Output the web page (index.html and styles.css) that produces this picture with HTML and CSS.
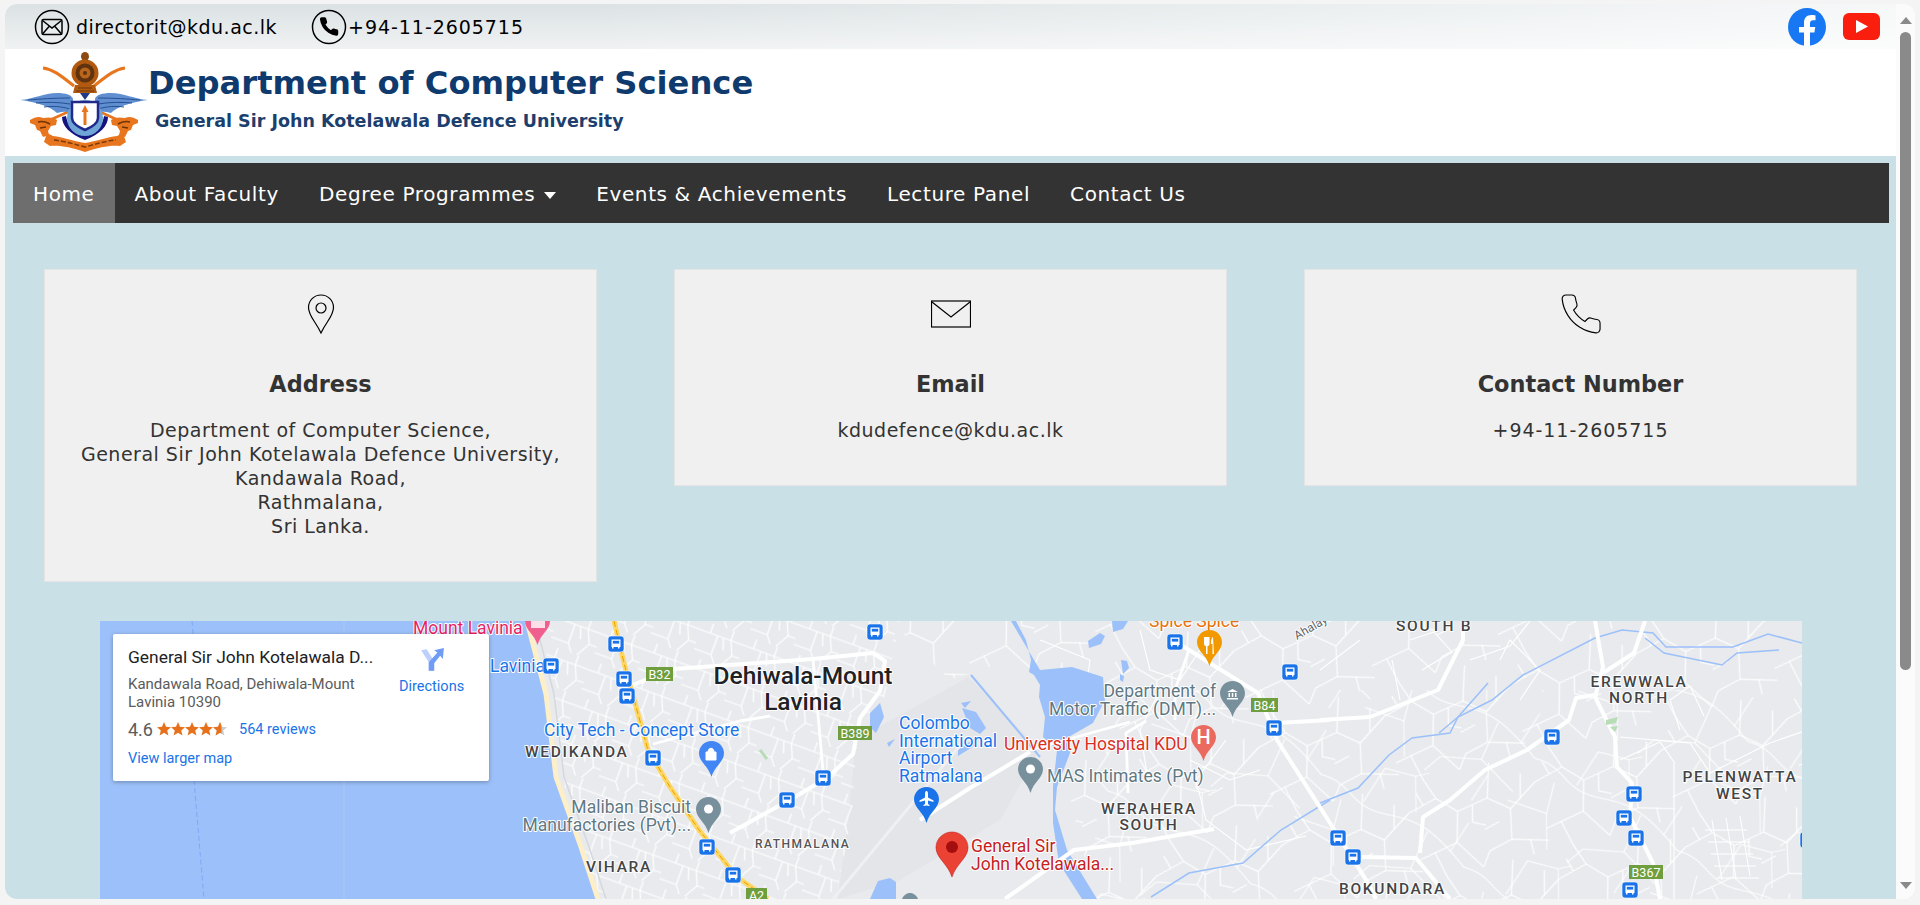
FILE: index.html
```html
<!DOCTYPE html>
<html lang="en">
  <head>
    <meta charset="UTF-8" />
    <title>Department of Computer Science</title>
    <link rel="stylesheet" href="styles.css">
  </head>
  <body>
    <div class="window">
      <div class="page">
        <div class="topbar">
          <div class="topbar_contact">
            <svg class="round_icon" viewBox="0 0 36 36"><circle cx="18" cy="18" r="16.500"/><rect x="8" y="10.500" width="20" height="15" rx="1.500"/><path d="M8.500 11.500 18 19l9.500-7.500M8.500 25l7-8M27.500 25l-7-8"/></svg>
            <span>directorit@kdu.ac.lk</span>
          </div>
          <div class="topbar_contact topbar_phone">
            <svg class="round_icon" viewBox="0 0 36 36"><circle cx="18" cy="18" r="16.500"/><g transform="translate(7 6.500) scale(.92)"><path class="solid" d="M22 16.920v3a2 2 0 0 1-2.180 2 19.790 19.790 0 0 1-8.630-3.070 19.500 19.500 0 0 1-6-6 19.790 19.790 0 0 1-3.070-8.670A2 2 0 0 1 4.110 2h3a2 2 0 0 1 2 1.720 12.840 12.840 0 0 0 .7 2.810 2 2 0 0 1-.45 2.110L8.090 9.910a16 16 0 0 0 6 6l1.270-1.270a2 2 0 0 1 2.110-.45 12.840 12.840 0 0 0 2.810.7A2 2 0 0 1 22 16.920z"/></g></svg>
            <span class="digits">+94-11-2605715</span>
          </div>
          <div class="topbar_social">
            <svg class="fb_icon" viewBox="0 0 38 38"><circle cx="19" cy="19" r="19" fill="#1877f2"/><path fill="#fff" d="M16 38V24.500h-5V19h5v-4.200c0-5 3-7.700 7.500-7.700 2.200 0 4 .4 4 .4v4.800h-2.300c-2.400 0-3.200 1.500-3.200 3V19h5.300l-.9 5.500H22V38z"/></svg>
            <svg class="yt_icon" viewBox="0 0 37 27"><rect width="37" height="27" rx="6" fill="#fa1e0f"/><path fill="#fff" d="M13 7l12 6.500L13 20z"/></svg>
          </div>
        </div>

        <div class="brand">
          <svg class="crest" viewBox="0 0 131 100">
            <!-- swords -->
            <path d="M23 16c9 1 16 6 31 18" stroke="#e8761e" stroke-width="3" fill="none"/>
            <path d="M105 16c-9 1-16 6-31 18" stroke="#e8761e" stroke-width="3" fill="none"/>
            <path d="M30 68l20-9M98 68 78 59" stroke="#e8761e" stroke-width="2.500"/>
            <!-- wheel -->
            <ellipse cx="65" cy="4.500" rx="4" ry="4.500" fill="#8a4a12"/>
            <circle cx="65" cy="21" r="13.500" fill="#b0590f"/>
            <circle cx="65" cy="21" r="9.500" fill="#5f3210"/>
            <circle cx="65" cy="21" r="5.500" fill="#b9651b"/>
            <circle cx="65" cy="21" r="2" fill="#5f3210"/>
            <path d="M55 33h20l2 8H53z" fill="#b0590f"/>
            <path d="M58 36h14M56 39h18" stroke="#6f3a10" stroke-width="1"/>
            <path d="M60 41h10l-5 7z" fill="#1f3a8a"/>
            <!-- wings -->
            <path d="M0 48c14-1 24-7 37-7 9 0 15 2 16 6l-1 14c-4-2-10-1-15 0-4-4-14-10-37-13z" fill="#5f8fd0"/>
            <path d="M128 48c-14-1-24-7-37-7-9 0-15 2-16 6l1 14c4-2 10-1 15 0 4-4 14-10 37-13z" fill="#5f8fd0"/>
            <path d="M8 48c12-1 26-2 42-2M16 51c10-1 22-1 34 1M24 55c8-1 16-1 26 2M120 48c-12-1-26-2-42-2M112 51c-10-1-22-1-34 1M104 55c-8-1-16-1-26 2" stroke="#274f92" stroke-width="1" fill="none"/>
            <!-- anchor -->
            <path d="M42 65l4-1c1 7 5 13 12 16h14c7-3 11-9 12-16l4 1c0 9-8 17-23 23C50 82 42 74 42 65z" fill="#14147f"/>
            <circle cx="65" cy="66" r="18" fill="#6fa5d6"/>
            <path d="M52 50h26v16c0 5-6 9-13 12-7-3-13-7-13-12z" fill="#fff" stroke="#1f2a8a" stroke-width="2.500"/>
            <path d="M65 53l3.500 7h-2v13h-3V60h-2z" fill="#e8761e"/>
            <!-- lions -->
            <path d="M10 68c5-3 9-4 13-2 5-1 10-1 14 2l-1 5-5 1-3 5 1 4-6 2-3-6-3-1-2-5-5-2z" fill="#e8761e"/>
            <path d="M18 70c4-1 8 0 12 2M20 76l6-1" stroke="#6f3406" stroke-width="1.500" fill="none"/>
            <path d="M118 68c-5-3-9-4-13-2-5-1-10-1-14 2l1 5 5 1 3 5-1 4 6 2 3-6 3-1 2-5 5-2z" fill="#e8761e"/>
            <path d="M110 70c-4-1-8 0-12 2M108 76l-6-1" stroke="#6f3406" stroke-width="1.500" fill="none"/>
            <!-- ribbon -->
            <path d="M27 81l6 3c10 1 20 5 32 7 12-2 22-6 32-7l6-3 3 9-6 4c-10-1-20 1-35 6-15-5-25-7-35-6l-6-4z" fill="#e8761e"/>
            <path d="M34 88c10 1 20 4 31 7 11-3 21-6 31-7" stroke="#7a3a0a" stroke-width="1.500" fill="none" stroke-dasharray="5 2"/>
          </svg>
          <div class="brand_text">
            <div class="brand_title">Department of Computer Science</div>
            <div class="brand_sub">General Sir John Kotelawala Defence University</div>
          </div>
        </div>

        <div class="main">
          <ul class="nav">
            <li class="nav_item nav_active">Home</li>
            <li class="nav_item">About Faculty</li>
            <li class="nav_item">Degree Programmes <span class="caret"></span></li>
            <li class="nav_item">Events &amp; Achievements</li>
            <li class="nav_item">Lecture Panel</li>
            <li class="nav_item">Contact Us</li>
          </ul>

          <div class="cards">
            <div class="card card_tall">
              <svg class="card_icon" viewBox="0 0 28 40"><path d="M14 1C7 1 1.500 6.500 1.500 13.500 1.500 22 9 28 14 39c5-11 12.500-17 12.500-25.500C26.500 6.500 21 1 14 1z"/><circle cx="14" cy="14" r="5"/></svg>
              <h3>Address</h3>
              <p>Department of Computer Science,<br>General Sir John Kotelawala Defence University,<br>Kandawala Road,<br>Rathmalana,<br>Sri Lanka.</p>
            </div>
            <div class="card">
              <svg class="card_icon" viewBox="0 0 40 40"><rect x="0.500" y="7" width="39" height="26"/><path d="M1 8l19 15L39 8"/></svg>
              <h3>Email</h3>
              <p>kdudefence@kdu.ac.lk</p>
            </div>
            <div class="card">
              <svg class="card_icon" viewBox="1.500 1.500 21 21"><path class="thin" d="M22 16.920v3a2 2 0 0 1-2.180 2 19.790 19.790 0 0 1-8.630-3.070 19.500 19.500 0 0 1-6-6 19.790 19.790 0 0 1-3.070-8.670A2 2 0 0 1 4.110 2h3a2 2 0 0 1 2 1.720 12.840 12.840 0 0 0 .7 2.810 2 2 0 0 1-.45 2.110L8.090 9.910a16 16 0 0 0 6 6l1.270-1.270a2 2 0 0 1 2.110-.45 12.840 12.840 0 0 0 2.810.7A2 2 0 0 1 22 16.920z"/></svg>
              <h3>Contact Number</h3>
              <p class="digits">+94-11-2605715</p>
            </div>
          </div>

          <div class="map">
            <svg class="map_canvas" viewBox="100 621 1702 278">
              <defs>
                <g id="bus">
                  <rect x="-8" y="-8" width="16" height="16" rx="3" fill="#1a73e8" stroke="#fff" stroke-width=".6"/>
                  <path d="M-4.500-4.500h9v7.500h-1v1.500h-1.500V3h-4.500v1.500h-1.500V3h-.5z" fill="#fff"/>
                  <rect x="-3.200" y="-3.200" width="6.400" height="2.800" fill="#1a73e8"/>
                </g>
                <path id="pin" d="M12.500 0C5.600 0 0 5.500 0 12.300 0 21 9.500 25 12.500 36 15.500 25 25 21 25 12.300 25 5.500 19.400 0 12.500 0z"/>
                <pattern id="blocks" width="46" height="38" patternUnits="userSpaceOnUse" patternTransform="rotate(20)">
                  <path d="M0 10H46M0 30H18L24 38M18 30V10M32 0V10M32 10L38 24H46M38 24L30 38M10 0V10M24 10L28 22" stroke="#fff" stroke-width="1.200" fill="none"/>
                </pattern>
                <pattern id="sparse_a" width="130" height="100" patternUnits="userSpaceOnUse" patternTransform="rotate(-14)">
                  <path d="M0 30L30 22 48 40 80 34 100 50 130 30M30 22L22 0M48 40L40 70 60 100M80 34L90 0M100 50L94 80 130 90M0 78L40 70M94 80L70 86 60 100M112 42 118 18M16 26 12 12M64 37 60 54 72 60M86 60 70 64M22 100 16 74M112 84V100" stroke="#fff" stroke-width="1.100" fill="none"/>
                </pattern>
                <pattern id="sparse_b" width="170" height="130" patternUnits="userSpaceOnUse" patternTransform="rotate(33)">
                  <path d="M0 60C30 50 40 70 70 60S110 40 170 60M50 60V20L80 10 90 0M80 10 100 40M120 50 126 90 170 100M126 90 90 110 84 130M0 110 40 100 60 130M40 100 30 70M140 100V130M150 55 150 20" stroke="#fff" stroke-width="1" fill="none"/>
                </pattern>
              </defs>

              <rect x="100" y="621" width="1702" height="278" fill="#e8eaed"/>
              <path d="M856 740 968 677l72 73-40 70-100 60-62 19 10-80z" fill="#e3e5e9"/>

              <!-- small streets -->
              <path d="M540 621H900L884 700 856 750 852 820 835 899H600L565 790 555 700z" fill="url(#blocks)"/>
              <path d="M890 621H1802V899H1095L1068 790 1120 700 1042 690 1010 660 950 680z" fill="url(#sparse_a)"/>
              <path d="M1095 690H1802V899H1095z" fill="url(#sparse_b)"/>
              <g stroke="#fff" stroke-width="1.100" fill="none">
                <path d="M1040 640l50 20-4 30M1140 630l10 40 30 10 20-30M1160 690l-20 40 8 50M1190 760l40 20 30-10M1226 740l-30 40 10 40 40 30 60-14"/>
                <path d="M1360 640l-40 30M1410 640l24-8 18 20-30 18M1400 700l-8-40M1470 660l40-14 20-25M1500 660l10-20 30 30-20 30M1620 737l70 6 20 30 60-30 40-14M1680 730l-10-30 20-14 14 30M1620 760l40-18 14 20 0 137"/>
                <path d="M1705 830h42M1708 842h42M1711 854h42M1714 866h42M1717 878h42M1712 820l10 60M1726 818l10 60M1740 816l10 60"/>
              </g>

              <!-- sea -->
              <path d="M100 621h427l19 73 10 83 25 70 17 52H100z" fill="#9cc0f9"/>
              <path d="M527 621l19 73 10 83 25 70 17 52" stroke="#fdefc8" stroke-width="5" fill="none"/>
              <path d="M535 621l19 73 10 83 25 70 17 52" stroke="#d5d8dc" stroke-width="1.500" fill="none"/>
              <path d="M192 621l5 60M194 780l10 119" stroke="#7fa9f2" stroke-width="1" stroke-dasharray="5 3" fill="none"/>
              <path d="M344 621v278" stroke="#a9c8fa" stroke-width="1"/>

              <!-- water -->
              <path d="M1011 621l29 49 32-3 31 10 2 23-12 23-26 15 3 15-13 34-2 23 12 40 30 49h-15l-23-36-6-40v-36l4-37-14-13 2-20-6-20 1-12-6-10-5-3 2-12-5-20-17-32z" fill="#9cc0f9"/>
              <path d="M1112 621h16l-5 8-10 3zM1088 641l12-8 5 3-4 8-12 4zM1121 660l6 1 2 7-6 6zM1120 674l4 2-1 6-3-2z" fill="#9cc0f9"/>
              <path d="M961 703l10-2-6 7zM962 708l14 4 10 16-6 6-10-6zM870 713l10-10 4 14-8 16-6-6zM887 743l8-4-6 8zM958 750l20-14-4 10-16 10zM870 899l8-18 12-3 6 4v17z" fill="#9cc0f9"/>
              <path d="M971 675l69 82" stroke="#9cc0f9" stroke-width="2" fill="none"/>
              <g stroke="#9cc0f9" stroke-width="1.500" fill="none">
                <path d="M1320 803l38-15 31-33 23-17 38-5 8-16 34-17 31-25 72-37 27-8 31 3 13 14 67 0 35-13 34 9"/>
                <path d="M1645 638l19 15 58 12 15-12 42-3"/>
                <path d="M1439 733l19-16M1458 717l30-34"/>
                <path d="M1330 800l-49 30-38 33-54 10-38 24"/>
              </g>

              <!-- main roads -->
              <g stroke="#fff" stroke-width="4" fill="none" stroke-linejoin="round">
                <path d="M620 690l53-21 140-10 60-6 12 8-5 30-20 27-7 36-26 24-34 20-63 35"/>
                <path d="M1005 899l69-49 58-7 82-14"/>
                <path d="M920 820l50-32 60-36"/>
                <path d="M1172 640l17 10 69 43 19 47 53 83 38 60 8 16"/>
                <path d="M1330 720l-53 3"/>
                <path d="M1463 621v19l-25 50-68 27-50 3"/>
                <path d="M1595 621l8 46-8 30 20 40 2 30 15 16-2 34 23 46 7 36"/>
                <path d="M1645 621l-11 32-31 20"/>
                <path d="M1595 695l-19 3-7 22-42 30-42 20-35 30-27 17-3 36"/>
                <path d="M1362 857l54 1 34 41"/>
              </g>
              <g stroke="#fff" stroke-width="2.800" fill="none" stroke-linejoin="round">
                <path d="M813 659l4 45 6 67"/>
                <path d="M770 716l-30 5-87 23"/>
                <path d="M1189 650l-14 40v30"/>
                <path d="M1128 793l-2-60 20-12"/>
                <path d="M1030 750l100-28"/>
              </g>
              <path d="M833 899l134-162" stroke="#eef0f2" stroke-width="3"/>
              <path d="M760 750l7 9" stroke="#b8dcb5" stroke-width="3"/>
              <path d="M1606 720l12-3-2 6-10 2zM1610 727l8-1-3 6z" fill="#b8dcb5"/>

              <!-- A2 road -->
              <path d="M614 621l11 46 23 83 22 37 29 43 38 47 31 22" stroke="#fdd663" stroke-width="5" fill="none"/>
              <path d="M614 621l11 46 23 83 22 37 29 43 38 47 31 22" stroke="#e8a200" stroke-width="1" stroke-dasharray="6 3" fill="none"/>

              <!-- labels -->
              <text class="lbl lbl_blue" x="490" y="672">Lavinia</text>
              <text class="lbl lbl_pink" x="413" y="634">Mount Lavinia</text>
              <text class="lbl lbl_city" text-anchor="middle" x="803" y="684">Dehiwala-Mount</text>
              <text class="lbl lbl_city" text-anchor="middle" x="803" y="710">Lavinia</text>
              <text class="lbl lbl_blue" x="544" y="736">City Tech - Concept Store</text>
              <text class="lbl lbl_area" x="525" y="757">WEDIKANDA</text>
              <text class="lbl lbl_grey" text-anchor="end" x="691" y="813">Maliban Biscuit</text>
              <text class="lbl lbl_grey" text-anchor="end" x="691" y="831">Manufactories (Pvt)...</text>
              <text class="lbl lbl_area" x="586" y="872">VIHARA</text>
              <text class="lbl lbl_blue" x="899" y="729">Colombo</text>
              <text class="lbl lbl_blue" x="899" y="747">International</text>
              <text class="lbl lbl_blue" x="899" y="764">Airport</text>
              <text class="lbl lbl_blue" x="899" y="782">Ratmalana</text>
              <text class="lbl lbl_red" x="1004" y="750">University Hospital KDU</text>
              <text class="lbl lbl_grey" x="1047" y="782">MAS Intimates (Pvt)</text>
              <text class="lbl lbl_grey" text-anchor="end" x="1216" y="697">Department of</text>
              <text class="lbl lbl_grey" text-anchor="end" x="1216" y="715">Motor Traffic (DMT)...</text>
              <text class="lbl lbl_area" text-anchor="middle" x="1149" y="814">WERAHERA</text>
              <text class="lbl lbl_area" text-anchor="middle" x="1149" y="830">SOUTH</text>
              <text class="lbl lbl_small" x="755" y="848">RATHMALANA</text>
              <text class="lbl lbl_main" x="971" y="852">General Sir</text>
              <text class="lbl lbl_main" x="971" y="870">John Kotelawala...</text>
              <text class="lbl lbl_food" x="1149" y="627">Spice Spice</text>
              <text class="lbl lbl_road" transform="translate(1297 640) rotate(-30)">Ahalaya</text>
              <text class="lbl lbl_area" x="1396" y="631">SOUTH B</text>
              <text class="lbl lbl_area" text-anchor="middle" x="1639" y="687">EREWWALA</text>
              <text class="lbl lbl_area" text-anchor="middle" x="1639" y="703">NORTH</text>
              <text class="lbl lbl_area" text-anchor="middle" x="1740" y="782">PELENWATTA</text>
              <text class="lbl lbl_area" text-anchor="middle" x="1740" y="799">WEST</text>
              <text class="lbl lbl_area" x="1339" y="894">BOKUNDARA</text>

              <!-- pins -->
              <use href="#pin" x="525" y="609" fill="#f0608f"/>
              <rect x="531" y="621" width="14" height="7" fill="#fff" opacity=".8"/>
              <use href="#pin" x="699" y="741" fill="#4285f4"/>
              <path d="M706 752h10v8h-10zM708 752c0-5 6-5 6 0" fill="#fff" stroke="#fff"/>
              <use href="#pin" x="696" y="797" fill="#78909c"/><circle cx="708.500" cy="809" r="4.500" fill="#fff"/>
              <use href="#pin" x="1197" y="630" fill="#f29900"/>
              <path d="M1204 637v7c0 2 2 2 2 2v8h1.500v-8s2 0 2-2v-7M1213 637c-2 1-2 5-2 7h1.500v10h1.500z" fill="#fff"/>
              <use href="#pin" x="1220" y="681" fill="#78909c"/>
              <path d="M1227 692l5.500-3 5.500 3zM1227 698h11v1.500h-11zM1228.500 693h1.500v4h-1.500zM1231.800 693h1.500v4h-1.500zM1235 693h1.500v4H1235z" fill="#fff"/>
              <use href="#pin" x="1191" y="725" fill="#ea6a60"/>
              <text class="pin_h" text-anchor="middle" x="1203.500" y="744">H</text>
              <use href="#pin" x="1018" y="757" fill="#78909c"/><circle cx="1030.500" cy="769" r="4.500" fill="#fff"/>
              <use href="#pin" x="914" y="787" fill="#1a73e8"/>
              <path d="M926.500 791c1 0 1.500 1 1.500 3v3.500l5.500 3v1.500l-5.500-1.500v3.500l1.500 1v1l-3-.6-3 .6v-1l1.500-1v-3.500l-5.500 1.500V800.500l5.500-3V794c0-2 .5-3 1.500-3z" fill="#fff"/>
              <path d="M952 832c-8.800 0-16 7-16 15.500C936 858 948 864 952 877c4-13 16-19 16-29.500C968 839 960.800 832 952 832z" fill="#ea4335" stroke="#c5221f" stroke-width=".6"/>
              <circle cx="952" cy="847" r="6" fill="#a50e0e"/>
              <path d="M902 899c2-5 6-6 8-6s6 1 8 6z" fill="#78909c"/>

              <!-- bus stops -->
              <use href="#bus" x="616" y="644"/><use href="#bus" x="551" y="666"/><use href="#bus" x="624" y="679"/>
              <use href="#bus" x="627" y="696"/><use href="#bus" x="653" y="758"/><use href="#bus" x="707" y="847"/>
              <use href="#bus" x="733" y="875"/><use href="#bus" x="875" y="632"/><use href="#bus" x="1175" y="642"/>
              <use href="#bus" x="1290" y="672"/><use href="#bus" x="1274" y="728"/><use href="#bus" x="823" y="778"/>
              <use href="#bus" x="787" y="800"/><use href="#bus" x="1552" y="737"/><use href="#bus" x="1634" y="794"/>
              <use href="#bus" x="1624" y="818"/><use href="#bus" x="1636" y="838"/><use href="#bus" x="1338" y="838"/>
              <use href="#bus" x="1353" y="857"/><use href="#bus" x="1630" y="890"/><use href="#bus" x="1808" y="840"/>

              <!-- road shields -->
              <g class="shield">
                <rect x="646" y="667" width="27" height="14"/><text x="659.500" y="678.500">B32</text>
                <rect x="838" y="726" width="34" height="14"/><text x="855" y="737.500">B389</text>
                <rect x="1251" y="698" width="27" height="14"/><text x="1264.500" y="709.500">B84</text>
                <rect x="746" y="888" width="21" height="14"/><text x="756.500" y="899.500">A2</text>
                <rect x="1629" y="865" width="34" height="14"/><text x="1646" y="876.500">B367</text>
              </g>
            </svg>

            <div class="map_card">
              <div class="map_card_left">
                <div class="map_title">General Sir John Kotelawala D...</div>
                <div class="map_addr">Kandawala Road, Dehiwala-Mount Lavinia 10390</div>
                <div class="map_rating">
                  <span class="map_score">4.6</span>
                  <svg class="map_stars" viewBox="0 0 70 14">
                    <defs><path id="star" d="M7 0l2 4.800 5 .4-3.800 3.300 1.200 5L7 10.800 2.600 13.500l1.200-5L0 5.200l5-.4z"/><clipPath id="half"><rect x="56" width="8.500" height="14"/></clipPath></defs>
                    <use href="#star" fill="#e7711b"/><use href="#star" x="14" fill="#e7711b"/><use href="#star" x="28" fill="#e7711b"/><use href="#star" x="42" fill="#e7711b"/><use href="#star" x="56" fill="#ccc"/><g clip-path="url(#half)"><use href="#star" x="56" fill="#e7711b"/></g>
                  </svg>
                  <span class="map_link map_reviews">564 reviews</span>
                </div>
                <div class="map_link">View larger map</div>
              </div>
              <div class="map_dir">
                <svg class="dir_icon" viewBox="0 0 24 24"><path d="M2 3l5-1 7 11v9H9v-8z" fill="#bcd0fb"/><path d="M9 22v-8l8-9-3-2 9-2-1 10-2.500-3L14 15v7z" fill="#6f9cf5"/></svg>
                <span class="map_link">Directions</span>
              </div>
            </div>
          </div>
        </div>
      </div>
      <div class="scrollbar">
        <span class="arrow_up"></span>
        <span class="thumb"></span>
        <span class="arrow_down"></span>
      </div>
    </div>
  </body>
</html>
```

FILE: styles.css
```css
html,
body {
  margin: 0;
  height: 100%;
  overflow: hidden;
}
body {
  box-sizing: border-box;
  padding: 4px 5px 6px 5px;
  background-color: #f4f4f4;
  font-family: "DejaVu Sans", sans-serif;
  color: #333;
}
.window {
  display: flex;
  height: 100%;
  border-radius: 12px;
  overflow: hidden;
  background-color: #fff;
}
.page {
  flex: 1;
  min-width: 0;
  overflow: hidden;
}

/* top strip */
.topbar {
  display: flex;
  align-items: center;
  height: 45px;
  padding-left: 29px;
  background: linear-gradient(to right, rgba(255, 255, 255, 0) 30%, rgba(255, 255, 255, .75)), linear-gradient(#dbe2e4, #f0f2f3);
  color: #000;
  font-size: 19px;
  letter-spacing: .5px;
}
.topbar_contact {
  display: flex;
  align-items: center;
  gap: 6px;
  margin-right: 34px;
}
.topbar_phone {
  gap: 1px;
}
.topbar .digits,
.card .digits {
  letter-spacing: .95px;
}
.round_icon {
  width: 36px;
  height: 36px;
  fill: none;
  stroke: #000;
  stroke-width: 1.5;
}
.solid {
  fill: #000;
  stroke: none;
}
.topbar_social {
  display: flex;
  align-items: center;
  gap: 17px;
  margin-left: auto;
  margin-right: 16px;
}
.fb_icon {
  width: 38px;
  height: 38px;
}
.yt_icon {
  width: 37px;
  height: 27px;
}

/* logo strip */
.brand {
  display: flex;
  height: 107px;
  padding-left: 15px;
  background-color: #fff;
}
.crest {
  width: 131px;
  height: 100px;
  margin-top: 3px;
}
.brand_text {
  margin-left: -3px;
  font-weight: bold;
}
.brand_title {
  margin-top: 14px;
  font-size: 32.200px;
  line-height: 40px;
  color: #0f3a6e;
  white-space: nowrap;
}
.brand_sub {
  margin-top: 8px;
  margin-left: 7px;
  font-size: 17.500px;
  line-height: 20px;
  color: #1c3f6e;
  white-space: nowrap;
}

/* blue part */
.main {
  height: 800px;
  padding: 7px 7px 0 8px;
  background-color: #c9e0e6;
}
.nav {
  display: flex;
  height: 60px;
  margin: 0;
  padding: 0;
  list-style: none;
  background-color: #333;
}
.nav_item {
  padding: 0 20px;
  line-height: 62px;
  font-size: 20px;
  letter-spacing: .62px;
  color: #fff;
}
.nav_active {
  background-color: #6e6e6e;
}
.caret {
  display: inline-block;
  margin-left: 2px;
  border-top: 7px solid #fff;
  border-left: 6px solid transparent;
  border-right: 6px solid transparent;
  vertical-align: 2px;
}

.cards {
  display: flex;
  align-items: flex-start;
  gap: 77px;
  margin: 46px 33px 0 31px;
}
.card {
  box-sizing: border-box;
  flex: 0 0 553px;
  height: 217px;
  padding: 24px 0 0 0;
  background-color: #f0f0f0;
  border: 1px solid #e4e4e4;
  text-align: center;
}
.card_tall {
  height: 313px;
}
.card_icon {
  display: block;
  width: 40px;
  height: 40px;
  margin: 0 auto;
  fill: none;
  stroke: #000;
  stroke-width: 1.2;
}
.thin {
  stroke-width: .6;
}
.card h3 {
  margin: 35px 0 0 0;
  font-size: 22.400px;
  line-height: 30px;
  color: #333;
}
.card p {
  margin: 19px 0 0 0;
  font-size: 19px;
  letter-spacing: .5px;
  line-height: 24px;
  color: #333;
}

/* map */
.map {
  position: relative;
  height: 278px;
  margin: 39px 87px 0 87px;
  overflow: hidden;
  background-color: #e8eaed;
}
.map_canvas {
  display: block;
  width: 1702px;
  height: 278px;
}
.lbl {
  font-family: Roboto, sans-serif;
  font-size: 17.500px;
  paint-order: stroke;
  stroke: #fff;
  stroke-width: 2px;
  stroke-linejoin: round;
}
.lbl_blue {
  fill: #1a73e8;
}
.lbl_pink {
  fill: #e91e63;
}
.lbl_grey {
  fill: #5f7883;
}
.lbl_red {
  fill: #d93025;
}
.lbl_main {
  fill: #c5221f;
}
.lbl_food {
  fill: #e8710a;
}
.lbl_city {
  font-size: 24.500px;
  font-weight: 500;
  fill: #202124;
}
.lbl_area {
  font-size: 15.500px;
  font-weight: 500;
  letter-spacing: 1.700px;
  fill: #444;
}
.lbl_small {
  font-size: 12px;
  font-weight: 500;
  letter-spacing: 1.500px;
  fill: #555;
}
.lbl_road {
  font-size: 12px;
  fill: #5f6368;
}
.pin_h {
  font-family: Roboto, sans-serif;
  font-size: 20px;
  font-weight: 500;
  fill: #fff;
}
.shield rect {
  fill: #6f9e3f;
}
.shield text {
  font-family: Roboto, sans-serif;
  font-size: 12.500px;
  fill: #fff;
  text-anchor: middle;
}
.map_card {
  position: absolute;
  top: 13px;
  left: 13px;
  display: flex;
  box-sizing: border-box;
  width: 376px;
  height: 147px;
  padding: 11px 15px;
  border-radius: 2px;
  background-color: #fff;
  box-shadow: 0 1px 4px rgba(0, 0, 0, .3);
  font-family: Roboto, sans-serif;
  font-size: 14.500px;
}
.map_card_left {
  width: 254px;
}
.map_title {
  font-size: 17.400px;
  font-weight: 400;
  line-height: 24px;
  color: #202124;
  white-space: nowrap;
}
.map_addr {
  margin-top: 6px;
  font-size: 15px;
  line-height: 18px;
  color: #5b5b5b;
}
.map_rating {
  display: flex;
  align-items: center;
  margin-top: 7px;
  height: 22px;
}
.map_score {
  font-size: 18px;
  color: #5b5b5b;
}
.map_stars {
  width: 70px;
  height: 14px;
  margin-left: 4px;
}
.map_reviews {
  margin-left: 12px;
}
.map_link {
  color: #1a73e8;
}
.map_rating + .map_link {
  margin-top: 10px;
}
.map_dir {
  display: flex;
  flex-direction: column;
  align-items: center;
  margin-left: 17px;
  margin-top: 2px;
}
.dir_icon {
  width: 26px;
  height: 26px;
  margin-bottom: 5px;
}

/* scrollbar */
.scrollbar {
  position: relative;
  display: flex;
  flex-direction: column;
  align-items: center;
  width: 19px;
  padding: 13px 0 10px 0;
  box-sizing: border-box;
  background-color: #fbfbfb;
}
.thumb {
  width: 11px;
  height: 638px;
  margin-top: 8px;
  border-radius: 6px;
  background-color: #8a8a8a;
}
.arrow_up {
  border-bottom: 7px solid #8a8a8a;
  border-left: 6.500px solid transparent;
  border-right: 6.500px solid transparent;
}
.arrow_down {
  margin-top: auto;
  border-top: 7px solid #8a8a8a;
  border-left: 6.500px solid transparent;
  border-right: 6.500px solid transparent;
}
```
